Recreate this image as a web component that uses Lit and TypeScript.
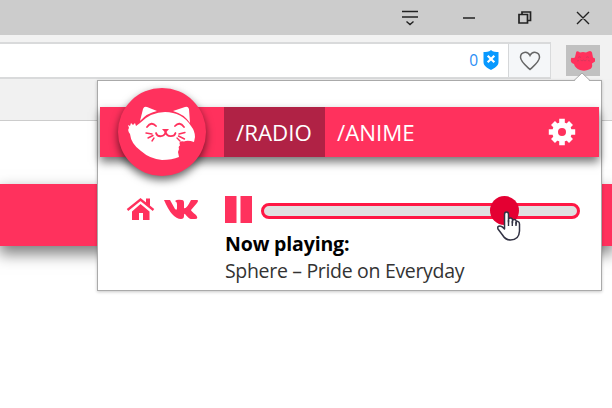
import { LitElement, html, css } from "lit";
import { customElement } from "lit/decorators.js";

@customElement("app-root")
export class AppRoot extends LitElement {
  static styles = css`
    :host { display: block; position: relative; width: 612px; height: 408px; overflow: hidden; background: #fff; font-family: "Open Sans", "Noto Sans", sans-serif; }
    * { box-sizing: border-box; }
    svg { display: block; }
    .titlebar { height: 35px; background: #ccc; display: flex; justify-content: flex-end; }
    .toolbar { height: 44px; background: #f2f2f2; display: flex; padding-top: 7px; position: relative; }
    .address { width: 551px; height: 37px; border: 2px solid #d9dadb; border-left: 0; border-right-width: 1px; background: #fff; display: flex; justify-content: flex-end; align-items: stretch; }
    .blocked { display: flex; align-items: center; gap: 5px; padding-right: 9px; color: #2a8df5; font-size: 15.5px; line-height: 33px; }
    .blocked svg { margin-top: -2px; }
    .heart { width: 42px; border-left: 1px solid #d5d7d9; background: #f5f7f9; display: flex; align-items: center; justify-content: center; }
    .extension { width: 34px; height: 31px; margin: 3px 0 0 15px; background: #c1c1c1; }
    .bookmarks { height: 42px; background: #f1f1f1; border-bottom: 1px solid #ccc; }
    .page { height: 287px; padding-top: 63px; background: #fff; }
    .band { height: 62px; background: #ff315d; box-shadow: 0 7px 14px 1px rgba(0,0,0,.5); }
    .popup { position: absolute; left: 97px; top: 80px; width: 505px; height: 211px; background: #fff; border: 1px solid #aaa; box-shadow: 0 1px 3px rgba(0,0,0,.22); }
    .notch { position: absolute; right: 9px; top: -9px; }
    .header { height: 50px; margin: 26px 2px 0 2px; background: #ff315d; box-shadow: 0 5px 9px rgba(0,0,0,.55); display: flex; align-items: center; position: relative; }
    .logo { width: 88px; height: 88px; margin-left: 18px; flex: none; border-radius: 50%; background: #ff315d; box-shadow: 0 4px 9px rgba(0,0,0,.6); }
    .tabs { display: flex; height: 50px; margin-left: 18px; color: #fff; font-size: 22.3px; line-height: 51px; }
    .tab { width: 101px; padding-left: 12px; white-space: nowrap; }
    .active { background: #b02245; }
    .gear { margin-left: auto; margin-right: 23px; }
    .controls { display: flex; align-items: center; height: 30px; margin: 37px 0 0 28px; }
    .vk { margin-left: 8px; }
    .pause { margin-left: 27px; }
    .slider { width: 319px; height: 16px; margin: 3px 0 0 9px; border: 3px solid #ff1744; border-radius: 8px; background: #e0e0e0; position: relative; }
    .thumb { position: absolute; left: 226px; top: -10px; width: 29px; height: 29px; border-radius: 50%; background: #e40032; }
    .cursor { position: absolute; left: 233px; top: 4px; }
    .track { margin: 7px 0 0 127px; font-size: 19.5px; line-height: 26.5px; color: #333; white-space: nowrap; }
    .label { color: #000; font-weight: 700; letter-spacing: -.15px; }
    .song { letter-spacing: -.32px; }
  `;

  render() {
    return html`
      <div class="titlebar">
        <svg width="232" height="35" fill="none" stroke="#222" stroke-width="1.4">
          <path d="M22 11.500h16M22 17h16M26.500 21.500l3.500 3 3.500-3M83 18h12M197 12l12 12M209 12l-12 12"/>
          <path stroke-width="1.700" d="M139 14.500h8.500v8.500h-8.500zM142 14v-2h8.500v8.500h-3"/>
        </svg>
      </div>
      <div class="toolbar">
        <div class="address">
          <div class="blocked"><span>0</span>
            <svg width="16" height="20" viewBox="0 0 16 20"><path fill="#0899ff" d="M8 0c2 2 5 2 7.500 2v10c0 4-4 6-7.500 8-3.500-2-7.500-4-7.500-8V2C3 2 6 2 8 0z"/><path stroke="#fff" stroke-width="2.200" d="M4.700 5.700l6.600 6.600M11.300 5.700l-6.600 6.600"/></svg>
          </div>
          <div class="heart"><svg width="22" height="20" viewBox="0 0 22 20"><path fill="none" stroke="#666" stroke-width="1.500" d="M11 18.500C6 14 1.500 10.500 1.500 6.300 1.500 .7 8.500-.5 11 4.500 13.500-.5 20.500 .7 20.500 6.300 20.500 10.500 16 14 11 18.500z"/></svg></div>
        </div>
        <div class="extension">
          <svg width="34" height="31" viewBox="0 0 34 31"><path fill="#ff315d" d="M10 8q0-3 4-.5 3-1 6 0 5-3 6 0l1 5 2 1v3l-3 2q1 5-3 6-4 2-9 .5-5-2-6-6-4-1-3-5 0-2 2-1 2 0 2-1z"/><path fill="none" stroke="#c93a5c" stroke-width=".7" d="M12 12.500q1.500-1.500 3 0M20 12.500q1.500-1.500 3 0M14.500 15q1.500 1.800 3 0q1.500 1.800 3 0M11 16l2-.5M22 15.500l2 .5"/></svg>
        </div>
      </div>
      <div class="bookmarks"></div>
      <div class="page"><div class="band"></div></div>

      <div class="popup">
        <svg class="notch" width="20" height="10"><path d="M0 9.500h2L10 1l8 8.500h2V10H0z" fill="#fff"/><path d="M0 8.500h2L10 1l8 7.500h2" fill="none" stroke="#aaa"/></svg>
        <div class="header">
          <div class="logo">
            <svg width="88" height="88" viewBox="0 0 88 88">
              <path fill="#fff" d="M22 33L25 21q1-3 4-2l10 4q-10 2-17 10zM55 23l12-4q3-1 4 2l1 14q-6-9-17-12z"/>
              <path fill="#fff" d="M22 35Q33 24 47 24q17 0 26 14 4 5 4 11l-1 5q-6-2-10-.5-6-1-4 4-2 1-1 3.500l-1 3 1 5q-7 3-17 3-12-1-21-9Q13 56 12 46q-3-4-1-6l-1-3 2 1 1-3 2 2 2-2 1 3z"/>
              <g fill="none" stroke="#ff315d" stroke-linecap="round">
                <path stroke-width="1.800" d="M29 39q4.500-6 9-1M57 38q4.500-5 9 1M38 45q1 3.500 5 3.200 4-.2 4.500-4.700 1 4.500 5 4.700 4 .2 5-3.200"/>
                <path stroke-width="1.400" d="M28 45l6 1M30 50l5-2.500M34 53l2-3M61 46l6-1.500M60.500 48l6 3M59 50l3 3"/>
              </g><path fill="#ff315d" d="M44 41h7l-3.500 4z"/>
            </svg>
          </div>
          <div class="tabs"><div class="tab active">/RADIO</div><div class="tab">/ANIME</div></div>
          <svg class="gear" width="28" height="28" viewBox="-14 -14 28 28" fill="none" stroke="#fff">
            <circle r="6.900" stroke-width="5.800"/>
            <path stroke-width="5.600" d="M0-13.200V-8M0 13.200V8M-13.200 0H-8M13.200 0H8M-9-9L-5.800-5.800M9-9L5.800-5.800M-9 9L-5.800 5.800M9 9L5.800 5.800"/>
          </svg>
        </div>
        <div class="controls">
          <svg width="30" height="26" viewBox="0 0 30 26"><path fill="#ff315d" d="M14.500 8l9 7.500V24H17v-7h-4v7H6v-8.500z"/><path fill="none" stroke="#ff315d" stroke-width="2.300" d="M1.500 14L14.500 3.500l13 10.500"/><path fill="#ff315d" d="M20 2.500h4v8l-4-3z"/></svg>
          <svg class="vk" width="34" height="20" viewBox="0 0 34 20"><path fill="#ff315d" d="M0 1h6l5 9q2 2 2-1V5q0-2-2-3 2-2 7-1 2 0 2 3v5q2 2 7-8h6q2 0 0 3l-6 7q0 1 5 5 3 4-1 4h-4q-2 0-6-5-1-1-1 2 0 3-3 3Q8 20 0 1z"/></svg>
          <svg class="pause" width="27" height="27"><path fill="#ff315d" d="M0 0h11.500v27H0zM15.500 0h11.500v27H15.500z"/></svg>
          <div class="slider"><div class="thumb"></div>
            <svg class="cursor" width="24" height="32" viewBox="0 0 24 32"><path fill="#fff" stroke="#333344" stroke-width="1.500" stroke-linejoin="round" d="M7.500 19V4.500q0-2.500 2-2.500t2 2.500V12V9.500q0-1.500 2-1.500t2 2v3V11q0-1.500 1.800-1.500t1.900 2V14v-2q.3-1 1.700-.5 1.600.5 1.600 2.500v7q-.5 9-9 9-5 0-8-5L1 19q-1-3 2-3 2 0 4.500 3z"/><path stroke="#333344" stroke-width="1.400" d="M11.500 10v6M15.300 11v5M19 12v4"/></svg>
          </div>
        </div>
        <div class="track"><div class="label">Now playing:</div><div class="song">Sphere – Pride on Everyday</div></div>
      </div>`;
  }
}
